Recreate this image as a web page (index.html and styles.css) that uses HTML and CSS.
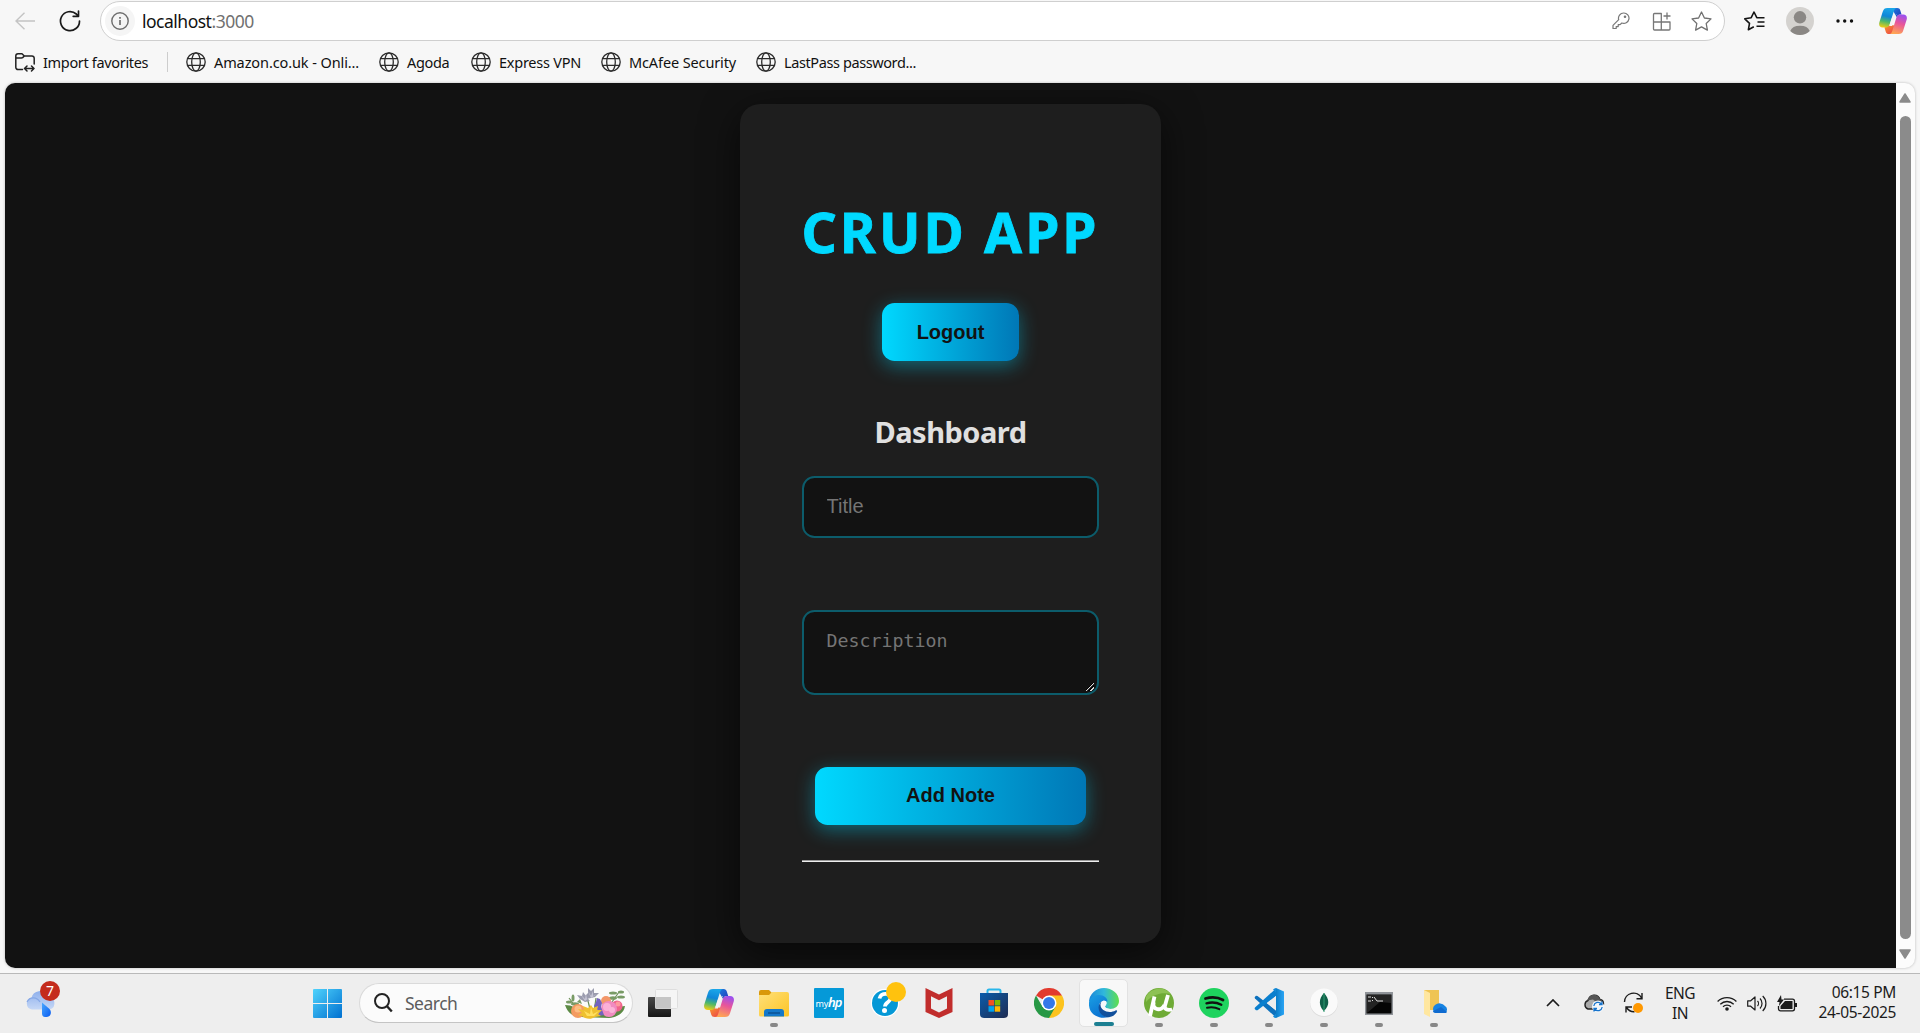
FILE: index.html
```html
<!DOCTYPE html>
<html lang="en">
<head>
<meta charset="utf-8">
<title>CRUD App</title>
<link rel="stylesheet" href="styles.css">
</head>
<body>
<svg class="defs" aria-hidden="true">
  <defs>
    <linearGradient id="cpA" x1="0.4" y1="0" x2="0.2" y2="1"><stop offset="0" stop-color="#1aa5e8"/><stop offset=".4" stop-color="#0f86d8"/><stop offset=".68" stop-color="#4fb86a"/><stop offset="1" stop-color="#f5cf12"/></linearGradient>
    <linearGradient id="cpB" x1="0.7" y1="0" x2="0.4" y2="1"><stop offset="0" stop-color="#9a50f0"/><stop offset=".45" stop-color="#e8559a"/><stop offset="1" stop-color="#ffa653"/></linearGradient>
    <linearGradient id="cpC" x1="0" y1="0" x2="1" y2="1"><stop offset="0" stop-color="#1c7de0"/><stop offset="1" stop-color="#2238b8"/></linearGradient>
    <linearGradient id="cpD" x1="0" y1="0" x2="1" y2="1"><stop offset="0" stop-color="#fb9a2a"/><stop offset="1" stop-color="#e8384f"/></linearGradient>
    <linearGradient id="win" x1="0" y1="0" x2="1" y2="1"><stop offset="0" stop-color="#4fd3fc"/><stop offset="1" stop-color="#0070d0"/></linearGradient>
    <linearGradient id="cloud" x1="0" y1="0" x2="0" y2="1"><stop offset="0" stop-color="#8fb0ec"/><stop offset="1" stop-color="#c6d8f6"/></linearGradient>
    <linearGradient id="drop" x1="0" y1="0" x2="1" y2="1"><stop offset="0" stop-color="#4aa8ff"/><stop offset="1" stop-color="#0a5cf0"/></linearGradient>
    <linearGradient id="tvDark" x1="0" y1="0" x2="0" y2="1"><stop offset="0" stop-color="#4a4a4a"/><stop offset="1" stop-color="#161616"/></linearGradient>
    <linearGradient id="folder" x1="0" y1="0" x2="1" y2="1"><stop offset="0" stop-color="#ffe07a"/><stop offset="1" stop-color="#fcc425"/></linearGradient>
    <linearGradient id="store" x1="0" y1="0" x2="1" y2="1"><stop offset="0" stop-color="#0b5cab"/><stop offset="1" stop-color="#1f2c52"/></linearGradient>
    <linearGradient id="edgeA" x1="0" y1="0.5" x2="1" y2="0.5"><stop offset="0" stop-color="#1a86d8"/><stop offset=".5" stop-color="#30b8dc"/><stop offset="1" stop-color="#5fe04a"/></linearGradient>
    <linearGradient id="edgeB" x1="0" y1="0" x2="0.6" y2="1"><stop offset="0" stop-color="#1ba0e4"/><stop offset="1" stop-color="#0a6fd0"/></linearGradient>
    <linearGradient id="vsc" x1="0" y1="0" x2="1" y2="0"><stop offset="0" stop-color="#0a7dc8"/><stop offset="1" stop-color="#2aa4f4"/></linearGradient>
    <symbol id="copilot" viewBox="0 0 30 28">
      <path d="M16 0h3.500c2 0 2.800.9 3.300 2.400L24.200 7h-1.500c-2 0-2.900 1-3.600 3L15 3z" fill="url(#cpC)"/>
      <path d="M5.800 21l1.400 4.500C7.700 27.200 8.700 28 11 28h4l3-9-6-1z" fill="url(#cpD)"/>
      <path d="M9 0h10.500c-2 0-2.800 1-3.500 3.200L11.600 17c-.9 2.800-2 4-4.800 4H4C.4 21-.7 18.400.5 14.800L4 3.800C4.900 1 6.200 0 9 0z" fill="url(#cpA)"/>
      <path d="M23 7h3c3.600 0 4.700 2.600 3.500 6.200L26 24.200C25.100 27 23.800 28 21 28H10.800c2 0 2.700-1 3.400-3.200L18.400 11C19.200 8.200 20.200 7 23 7z" fill="url(#cpB)"/>
      <path d="M17.700 8.500c.5-1 1-1.500 2.500-1.500h-2L14 19.500h-3.300c.6-.7.900-1.500 1.200-2.500l1.500-5c.7-2.300 1.700-3.500 4.300-3.500z" fill="#f6f3f6"/>
    </symbol>
    <symbol id="globe" viewBox="0 0 20 20">
      <g fill="none" stroke="#2b2b2b" stroke-width="1.300"><circle cx="10" cy="10" r="9.200"/><ellipse cx="10" cy="10" rx="4.300" ry="9.200"/><path d="M1.500 6.700h17M1.500 13.300h17"/></g>
    </symbol>
  </defs>
</svg>

<div class="browser">
  <header class="toolbar">
    <svg class="back" width="20" height="18" viewBox="0 0 20 18" fill="none" stroke="#c4c4c4" stroke-width="1.400"><path d="M9.500.8L1 9l8.500 8.200M1 9h19"/></svg>
    <svg class="reload" width="22" height="22" viewBox="0 0 22 22" fill="none" stroke="#1a1a1a" stroke-width="1.700" stroke-linecap="round" stroke-linejoin="round"><path d="M20.500 11A9.500 9.500 0 1 1 17.300 4l2 2.200M19.500 1v5.300h-5.300"/></svg>
    <div class="address">
      <span class="site-info"><svg width="18" height="18" viewBox="0 0 18 18" fill="none" stroke="#6e6e6e" stroke-width="1.400"><circle cx="9" cy="9" r="8.200"/><path d="M9 8v5M9 5v1.700" stroke-width="1.700"/></svg></span>
      <span class="url">localhost<span class="port">:3000</span></span>
      <svg class="key" width="18" height="18" viewBox="0 0 18 18" fill="none" stroke="#777" stroke-width="1.200" stroke-linejoin="round"><path d="M11.700 1a5.200 5.200 0 0 0-5 6.700L1 13.400V16.500h3.200V14.600h2V12.600h1.900l1.700-1.600A5.200 5.200 0 1 0 11.700 1z"/><circle cx="13" cy="4.700" r=".7" fill="#777"/></svg>
      <svg class="apps" width="20" height="20" viewBox="0 0 20 20" fill="none" stroke="#777" stroke-width="1.300" stroke-linejoin="round"><path d="M9.300 10V2.500H2.500a1 1 0 0 0-1 1V18a1 1 0 0 0 1 1H17a1 1 0 0 0 1-1v-7H1.500M9.300 10v9M15 1.500v7M11.500 5h7"/></svg>
      <svg width="21" height="20" viewBox="0 0 21 20" fill="none" stroke="#707070" stroke-width="1.300" stroke-linejoin="round"><path d="M10.500 1l2.900 6 6.600.9-4.800 4.600 1.200 6.600-5.900-3.200-5.900 3.200 1.200-6.600L1 7.900 7.600 7z"/></svg>
    </div>
    <svg class="favs" width="21" height="20" viewBox="0 0 21 20" fill="none" stroke="#151515" stroke-width="1.600" stroke-linejoin="round"><path d="M13.500 6.700h-.7L10 1 7.200 6.700.8 7.800l4.700 4.500-1.100 6.400 5.400-3M12.500 6.700h8M13.500 11h7M12.500 15.200h8"/></svg>
    <svg class="avatar" width="28" height="28" viewBox="0 0 28 28"><circle cx="14" cy="14" r="14" fill="#d4d2cf"/><circle cx="14" cy="10.300" r="6.200" fill="#8a8784"/><path d="M4.300 24a10 7 0 0 1 19.400 0A14 14 0 0 1 4.300 24z" fill="#8a8784"/></svg>
    <svg class="dots" width="18" height="4" viewBox="0 0 18 4" fill="#111"><circle cx="2" cy="2" r="1.700"/><circle cx="8.700" cy="2" r="1.700"/><circle cx="15.500" cy="2" r="1.700"/></svg>
    <svg width="28" height="26"><use href="#copilot"/></svg>
  </header>

  <nav class="favorites">
    <span class="fav import"><svg width="20" height="19" viewBox="0 0 20 19" fill="none" stroke="#222" stroke-width="1.500" stroke-linecap="round" stroke-linejoin="round"><path d="M7.500 16.500H3a2.200 2.200 0 0 1-2.200-2.200V3A2.200 2.200 0 0 1 3 .8h4L9.300 3H17a2.200 2.200 0 0 1 2.200 2.200V11M.8 5H6.500c1 0 1.800-.7 2.800-2M9.500 15.500h9.500M12 13l-2.500 2.500L12 18M16.500 13l2.500 2.500-2.500 2.500"/></svg><span>Import favorites</span></span>
    <span class="sep"></span>
    <span class="fav amazon"><svg width="20" height="20"><use href="#globe"/></svg><span>Amazon.co.uk - Onli...</span></span>
    <span class="fav agoda"><svg width="20" height="20"><use href="#globe"/></svg><span>Agoda</span></span>
    <span class="fav express"><svg width="20" height="20"><use href="#globe"/></svg><span>Express VPN</span></span>
    <span class="fav mcafee"><svg width="20" height="20"><use href="#globe"/></svg><span>McAfee Security</span></span>
    <span class="fav lastpass"><svg width="20" height="20"><use href="#globe"/></svg><span>LastPass password...</span></span>
  </nav>

  <div class="viewport">
    <main class="page">
      <section class="card">
        <h1>CRUD APP</h1>
        <button class="btn logout" type="button">Logout</button>
        <h2>Dashboard</h2>
        <input class="field title" type="text" placeholder="Title">
        <textarea class="field description" placeholder="Description"></textarea>
        <button class="btn add" type="button">Add Note</button>
        <div class="rule"></div>
      </section>
    </main>
    <div class="scrollbar">
      <svg width="12" height="10" viewBox="0 0 12 10"><path d="M6 1l5 8H1z" fill="#8b8b8b" stroke="#8b8b8b" stroke-linejoin="round" stroke-width="1.500"/></svg>
      <span class="thumb"></span>
      <svg width="12" height="10" viewBox="0 0 12 10"><path d="M6 9l5-8H1z" fill="#8b8b8b" stroke="#8b8b8b" stroke-linejoin="round" stroke-width="1.500"/></svg>
    </div>
  </div>
</div>

<footer class="taskbar">
  <div class="weather">
    <svg width="30" height="28" viewBox="0 0 30 28"><path d="M6 20.500a6 6 0 0 1-.5-11.800A8.500 8.500 0 0 1 21.500 7a7 7 0 0 1 2.500 13.500z" fill="url(#cloud)"/><path d="M1 13c3-6 10-5 13 0" fill="none" stroke="#86a8e6" stroke-width="1.200"/><path d="M16 13.500l7.500 6.500c3 3.500.8 8-3 8H19c-2 0-3-1.500-3-3.500z" fill="url(#drop)"/></svg>
    <span class="badge">7</span>
  </div>
  <svg class="start" width="29" height="29" viewBox="0 0 29 29"><path d="M1 0h13v14H0V1a1 1 0 0 1 1-1zM15 0h13a1 1 0 0 1 1 1v13H15zM0 15h14v14H1a1 1 0 0 1-1-1zM15 15h14v13a1 1 0 0 1-1 1H15z" fill="url(#win)"/></svg>
  <div class="search">
    <svg width="19" height="20" viewBox="0 0 19 20" fill="none" stroke="#222" stroke-width="2"><circle cx="8" cy="8" r="7"/><path d="M12.800 13l5 5.500" stroke-width="2.400"/></svg>
    <span>Search</span>
    <svg width="62" height="32" viewBox="0 0 62 32">
      <path d="M1 18c3 9 8 11 16 12l28 1c9-1 15-5 16-12-6 0-10 3-13 7L17 28C13 21 8 18 1 18z" fill="#5c8a45"/>
      <g stroke="#6b8f56" stroke-width="1.200" fill="none"><path d="M30 25l2-14M26 22l-3-12M12 20L5 11M48 15l7-10"/></g>
      <g fill="#799b66"><ellipse cx="5" cy="15" rx="3" ry="1.500"/><ellipse cx="9" cy="11" rx="1.500" ry="3.500"/><ellipse cx="11" cy="17" rx="4" ry="1.700"/><ellipse cx="49" cy="6" rx="4" ry="1.500"/><ellipse cx="57" cy="5" rx="3" ry="1.500"/><ellipse cx="49" cy="11" rx="4" ry="1.800"/><ellipse cx="57" cy="10" rx="4" ry="1.600"/><path d="M13 15l3-3 2 5z"/></g>
      <g fill="#9b9cae"><path d="M13 8l5 1 1-4 3 4 3-1-1 4 2 2-5 1-5-3zM21 9l3-3 0-5 3 3 3-3 0 5 5 0-4 4-4 1-5 1z"/></g>
      <g fill="#c6c5d5"><path d="M17 8l4 4 1-5 1 5 3-2-5 4zM24 4l3 5 2-5 0 5 4-2-6 4z"/></g>
      <circle cx="14" cy="24" r="7" fill="#f39a61"/><circle cx="14" cy="22" r="3.500" fill="#fcbd83"/>
      <circle cx="42" cy="14" r="5" fill="#f39769"/><circle cx="53" cy="19" r="5.500" fill="#f0648c"/><circle cx="54" cy="17" r="2.500" fill="#fd9a9e"/>
      <circle cx="45" cy="22" r="8" fill="#f18bc0"/><circle cx="43" cy="20" r="4" fill="#fbb0d7"/><circle cx="48" cy="23" r="3" fill="#fbb4d8"/>
      <path d="M33 11l3 1 2 4-1 4 3 8-5 1-2-7-3-3 2-4z" fill="#7363bd"/>
      <path d="M14 22l6 1-1-4 5 2 3-3 2 3 5-2-1 4 5 0-4 4 3 2-6 1c-4 3-10 2-13-1l-4-1 4-2z" fill="#efc02f"/><path d="M20 24l6 3 1-7 2 7 6-3-5 5h-7z" fill="#ffdf5e"/>
    </svg>
  </div>
  <svg class="taskview" width="30" height="28" viewBox="0 0 30 28"><rect x="0" y="8" width="23" height="20" rx="1" fill="url(#tvDark)"/><rect x="7.500" y=".5" width="22" height="19" rx="1" fill="#f5f5f5" stroke="#dedede"/><path d="M7.500 8H23v11.500H7.500z" fill="#c5c5c5"/></svg>

  <div class="apps-row">
    <span class="app"><svg width="30" height="28"><use href="#copilot"/></svg></span>
    <span class="app running"><svg width="30" height="28" viewBox="0 0 30 28"><path d="M0 3a2 2 0 0 1 2-2h8l3 3v4H0z" fill="#d9980a"/><path d="M0 6h10l3-3h15a2 2 0 0 1 2 2v21a1.500 1.500 0 0 1-1.500 1.500h-27A1.500 1.500 0 0 1 0 26z" fill="url(#folder)"/><path d="M5 27.500V23a3 3 0 0 1 3-3h14a3 3 0 0 1 3 3v4.500z" fill="#1378ca"/><path d="M9 24h12" stroke="#0a4d8c" stroke-width="1.300"/></svg></span>
    <span class="app"><span class="myhp">my<b>hp</b></span></span>
    <span class="app"><svg class="help" width="36" height="36" viewBox="0 0 36 36"><circle cx="15" cy="21" r="14.300" fill="#fff"/><circle cx="15" cy="21" r="13" fill="#0598d6"/><path d="M9.500 16.500c1-6.500 12-6 11 .3-.6 3.500-5.500 3.700-5.500 7.700" fill="none" stroke="#fff" stroke-width="3.800"/><circle cx="14.500" cy="28.500" r="2.500" fill="#fff"/><circle cx="26" cy="10" r="10" fill="#ffc20e"/></svg></span>
    <span class="app"><svg width="28" height="30" viewBox="0 0 28 30"><path d="M.5 0L14 6.500 27.500 0v24L14 30 .500 24z" fill="#c12d2c"/><path d="M6 8.300l8 4 8-4V20.500L14 24.500l-8-4z" fill="#ededed"/></svg></span>
    <span class="app"><svg width="30" height="30" viewBox="0 0 30 30"><path d="M8.500 6V3a1.500 1.500 0 0 1 1.500-1.500h10A1.500 1.500 0 0 1 21.500 3v3" fill="none" stroke="#29b6ea" stroke-width="2"/><path d="M1 5h28v21a4 4 0 0 1-4 4H5a4 4 0 0 1-4-4z" fill="url(#store)"/><path d="M9.500 12h5.500v5.500H9.500z" fill="#f25022"/><path d="M15.700 12h5.500v5.500h-5.500z" fill="#7fba00"/><path d="M9.500 18.200h5.500v5.500H9.500z" fill="#00a4ef"/><path d="M15.700 18.200h5.500v5.500h-5.500z" fill="#ffb900"/></svg></span>
    <span class="app"><svg width="30" height="30" viewBox="0 0 30 30"><path d="M15 15L2 7.500A15 15 0 0 1 28 7.500z" fill="#e23a2e"/><path d="M15 15V7.500H28A15 15 0 0 1 15 30z" fill="#fcc31e"/><path d="M2 7.500l6.500 11.300L15 22l6.500-3.200L15 30A15 15 0 0 1 2 7.500z" fill="#279845"/><circle cx="15" cy="15" r="7.500" fill="#fff"/><circle cx="15" cy="15" r="6" fill="#3478e8"/></svg></span>
    <span class="app active"><svg width="30" height="30" viewBox="0 0 30 30"><path d="M0 14A15 14.500 0 0 1 15 0c8 0 15 5.500 15 13 0 5-4 8-9 8-3 0-5-1-5-2.500 0-1 1.500-1.300 1.500-3.500C17.500 9.500 6 7 0 14z" fill="url(#edgeA)"/><path d="M0 14.500C1 9 6 7 10 7c5 0 8.500 3 8.500 6.500-5-2-8.500 1-8.500 5C10 24 15 29 20 29 9 32-1 26 0 14.500z" fill="url(#edgeB)"/><path d="M12.500 13.500C8 17 8.500 25 15.500 28.500c5 2 10.500-.5 12.500-5 .5-1-.5-1.500-1.500-1C20.500 26 11 23 11.500 16z" fill="#12509c"/><path d="M14 13a4 4 0 0 0-1 5.500c2 3.500 7 4 10 2.500-4 0-7-1-7-2.500 0-1 1.500-1.500 1.500-3.500 0-1.500-1.500-2.500-3.500-2z" fill="#f5f8fb"/></svg></span>
    <span class="app running"><svg width="30" height="30" viewBox="0 0 30 30"><circle cx="15" cy="15" r="15" fill="#6fab36"/><path d="M2 9a15 15 0 0 1 25-3C18 4 9 6 2 14z" fill="#8dc254"/><path d="M10.500 8.500L6 28M9.700 14c-2 8.500 8 9.500 10.800 3M24 7l-3 10.500c-1 3.500 1.500 5 7 4" fill="none" stroke="#fff" stroke-width="3.800"/></svg></span>
    <span class="app running"><svg width="30" height="30" viewBox="0 0 30 30"><circle cx="15" cy="15" r="15" fill="#1ed35e"/><g fill="none" stroke="#111" stroke-linecap="round"><path d="M6.500 10.500c6-1.700 12.500-1.200 17.500 1.500" stroke-width="2.800"/><path d="M7.500 15.300c5-1.300 10.500-.8 14.800 1.500" stroke-width="2.400"/><path d="M8 19.800c4.500-1 8.500-.5 12.300 1.400" stroke-width="2"/></g></svg></span>
    <span class="app running"><svg width="30" height="30" viewBox="0 0 30 30"><path d="M3.500 8L22 22.500v7L1 10.500a1.500 1.500 0 0 1 0-1.800l1-1z" fill="#0d71bd"/><path d="M3.500 22.300L22 8V.5L1 19.500a1.500 1.500 0 0 0 0 1.800l1 1z" fill="#0a7fce"/><path d="M22 0l8 3.500v23L22 30z" fill="url(#vsc)"/><path d="M22 8v14.500L13 15z" fill="#ededed"/><path d="M22 0c-1 0-2 .5-3 1.500l3 3zM22 30c-1 0-2-.5-3-1.500l3-3z" fill="#128ad8"/></svg></span>
    <span class="app running"><svg width="28" height="30" viewBox="0 0 28 30"><circle cx="14" cy="15" r="14" fill="#dcdcdc"/><circle cx="14" cy="14.300" r="13.800" fill="#fafafa"/><path d="M14 5c5.500 5.500 6 13-.3 18C8.500 18 8.500 10.500 14 5z" fill="#116149"/><path d="M14 5v19" stroke="#2e9b71" stroke-width="1"/></svg></span>
    <span class="app running"><svg width="28" height="23" viewBox="0 0 28 23"><path d="M0 0h28v23H0z" fill="#8f9398"/><path d="M1.500 2.500h25v19h-25z" fill="#050505"/><path d="M2 21l13-11 11 1V3H2z" fill="#232323"/><path d="M3 5h3M3 9h3M7.500 5v1M7.500 8v1M9 5l3 4h6" fill="none" stroke="#ddd" stroke-width="1"/></svg></span>
    <span class="app running"><svg width="30" height="28" viewBox="0 0 30 28"><path d="M5 1h15v20H5z" fill="#efc454"/><path d="M5 1l6 3v24l-6-3z" fill="#ffe7a0"/><path d="M16 24a5 5 0 0 1 0-8 7 7 0 0 1 10 1 4 4 0 0 1 0 7z" fill="#1683e2"/><path d="M14 22l8-4 6 5c-1 1-1 1-2 1H17c-2 0-3-1-3-2z" fill="#0f6bd0"/></svg></span>
  </div>

  <div class="tray">
    <svg class="chev" width="14" height="8" viewBox="0 0 14 8" fill="none" stroke="#1b1b1b" stroke-width="1.700"><path d="M1 7l6-6 6 6"/></svg>
    <svg class="onedrive" width="22" height="19" viewBox="0 0 22 19"><path d="M5 15a4.500 4.500 0 0 1 0-8.500C7-.5 15-.5 17 5.500c2 .2 3.500 2 3.500 4.500L10 15z" fill="#aaa" stroke="#222" stroke-width="1.400"/><path d="M4 6.500l6-1 6 5 4-2-3-3.500C14-1 7-1 4 6.500z" fill="#555"/><circle cx="15" cy="12.500" r="6" fill="#f2f6fa"/><path d="M10.800 12a4.300 4.300 0 0 1 7.500-2.200l.5.700M19.200 13a4.300 4.300 0 0 1-7.500 2.200l-.5-.7M19 7.500v3h-3M11 17.500v-3h3" fill="none" stroke="#1673cc" stroke-width="1.300"/></svg>
    <svg class="sync" width="22" height="22" viewBox="0 0 22 22" fill="none" stroke="#1b1b1b" stroke-width="1.400"><path d="M1.500 10A9 9 0 0 1 18.500 6M19 1v5.700h-5.500M3 20.500V15h6M3.500 15.500c2 3 5 4.500 8 4.300"/><circle cx="15" cy="16" r="5" fill="#ff9800" stroke="none"/></svg>
    <div class="lang"><span>ENG</span><span>IN</span></div>
    <svg class="wifi" width="20" height="15" viewBox="0 0 20 15" fill="none" stroke="#1b1b1b" stroke-width="1.300"><path d="M.6 5.500a13.500 13.500 0 0 1 18.800 0M3.300 8.200a9.600 9.600 0 0 1 13.400 0M6 10.800a5.700 5.700 0 0 1 8 0"/><circle cx="10" cy="13" r="1.800" fill="#1b1b1b" stroke="none"/></svg>
    <svg class="sound" width="20" height="17" viewBox="0 0 20 17" fill="none" stroke="#1b1b1b" stroke-width="1.200" stroke-linejoin="round"><path d="M.7 5.800h3L8 2v13l-4.300-3.800h-3zM10.500 6c1.300 1.300 1.300 3.700 0 5M13 3.500c2.700 2.700 2.700 7.300 0 10M15.700 1c4.300 4 4.300 11 0 15"/></svg>
    <svg class="battery" width="20" height="17" viewBox="0 0 20 17"><path d="M7 4.200h8.500a2 2 0 0 1 2 2v7.600a2 2 0 0 1-2 2H3.500a2 2 0 0 1-2-2V11" fill="none" stroke="#1b1b1b" stroke-width="1.300"/><path d="M8 6h7.500v8h-12v-3zM18 8h2v4h-2z" fill="#1b1b1b"/><path d="M4 0L0 7h2.500L2 11l5-6.500H4.500z" fill="#1b1b1b"/></svg>
    <div class="clock"><span>06:15 PM</span><span>24-05-2025</span></div>
  </div>
</footer>
</body>
</html>
```
FILE: styles.css
```css
* { box-sizing: border-box; }

body {
  margin: 0;
  width: 1920px;
  height: 1033px;
  overflow: hidden;
  display: flex;
  flex-direction: column;
  background: #f7f7f7;
  font-family: "Noto Sans", "Open Sans", sans-serif;
  color: #1b1b1b;
}

svg { display: block; flex: none; }
.defs { position: absolute; width: 0; height: 0; }

/* Browser chrome */
.browser { height: 973px; display: flex; flex-direction: column; }

.toolbar {
  height: 41px;
  flex: none;
  display: flex;
  align-items: center;
  padding: 1px 13px 0 15px;
}
.reload { margin-left: 24px; }
.address {
  width: 1625px;
  height: 40px;
  margin-left: 19px;
  display: flex;
  align-items: center;
  background: #fff;
  border: 1px solid #cfcfcf;
  border-radius: 20px;
  padding: 0 12px 0 4px;
}
.site-info {
  width: 30px;
  height: 30px;
  display: flex;
  align-items: center;
  justify-content: center;
  border-radius: 50%;
  background: #f5f5f5;
}
.url {
  flex: 1;
  margin-left: 7px;
  font-size: 17.500px;
  line-height: 24px;
  letter-spacing: -0.5px;
  color: #111;
}
.port { color: #717171; }
.key { margin-right: 22px; }
.apps { margin-right: 19px; }
.favs { margin-left: 19px; }
.avatar { margin-left: 21px; }
.dots { margin: 0 25px 0 22px; }

.favorites {
  height: 42px;
  flex: none;
  display: flex;
  align-items: center;
  padding-left: 15px;
  font-size: 14.500px;
  line-height: 20px;
  letter-spacing: -0.33px;
  color: #111;
}
.fav { display: flex; align-items: center; gap: 8px; white-space: nowrap; flex: none; }
.import { width: 152px; }
.sep { width: 1px; height: 20px; margin-right: 18px; background: #cdcdcd; }
.amazon { width: 193px; letter-spacing: -0.1px; }
.agoda { width: 92px; }
.express { width: 130px; letter-spacing: -0.25px; }
.mcafee { width: 155px; letter-spacing: -0.12px; }
.lastpass { letter-spacing: -0.4px; }

.viewport {
  height: 885px;
  flex: none;
  display: flex;
  margin: 0 5px;
  border-radius: 10px;
  overflow: hidden;
  background: #fcfcfc;
  box-shadow: 0 0 3px rgba(0, 0, 0, .25);
}

/* Application page */
.page {
  width: 1891px;
  display: flex;
  justify-content: center;
  align-items: flex-start;
  padding-top: 21px;
  background: #121212;
}
.card {
  width: 421px;
  height: 839px;
  display: flex;
  flex-direction: column;
  align-items: center;
  padding: 90px 62px 0;
  border-radius: 20px;
  background: #1e1e1e;
  box-shadow: 0 10px 38px rgba(0, 0, 0, .6);
}
h1 {
  margin: 0;
  font-size: 55px;
  line-height: 76px;
  letter-spacing: 3px;
  font-weight: 700;
  white-space: nowrap;
  color: #00d9ff;
  -webkit-text-stroke: 0.8px #00d9ff;
}
h2 {
  margin: 51px 0 24px;
  font-size: 29px;
  line-height: 40px;
  letter-spacing: -0.5px;
  font-weight: 700;
  color: #e0e0e0;
}
.btn {
  height: 58px;
  padding: 0;
  flex: none;
  border: 0;
  border-radius: 12.500px;
  background: linear-gradient(90deg, #00d9ff, #0077b6);
  box-shadow: 0 5px 19px rgba(0, 217, 255, .4);
  font: 700 20px/23px "Liberation Sans", Arial, sans-serif;
  color: #121212;
}
.logout { width: 137px; margin-top: 33px; }
.add { width: 271px; margin-top: 72px; padding-bottom: 2px; }
.field {
  width: 297px;
  flex: none;
  margin: 0;
  padding: 17px 22.500px;
  border: 2px solid #0c5c6b;
  border-radius: 12.500px;
  background: #121212;
  color: #e0e0e0;
}
.field::placeholder { color: #757575; }
.title { height: 62px; padding-bottom: 18px; font: 20px/23px "Liberation Sans", Arial, sans-serif; }
.description {
  height: 85px;
  margin-top: 72px;
  overflow: hidden;
  resize: both;
  font: 18.300px/23px "DejaVu Sans Mono", monospace;
}
.description::-webkit-resizer {
  background: linear-gradient(135deg, transparent 38%, #000 40%, #000 44%, #ddd 46%, #ddd 54%, #000 57%, #000 70%, #ddd 73%, #ddd 81%, transparent 84%) right 3px bottom 2px / 8px 8px no-repeat;
}
.rule {
  width: 297px;
  height: 2px;
  margin-top: 35px;
  border-top: 1px solid #9a9a9a;
  border-bottom: 1px solid #eee;
}

.scrollbar {
  flex: 1;
  display: flex;
  flex-direction: column;
  align-items: center;
  padding: 10px 1px 9px 0;
}
.thumb { width: 11px; height: 824px; margin: 13px 0 10px; border-radius: 6px; background: #8b8b8b; }

/* Taskbar */
.taskbar {
  height: 60px;
  display: flex;
  align-items: center;
  padding-bottom: 1px;
  border-top: 1px solid #b9b9b9;
  background: #eee;
}
.weather { position: relative; margin-left: 26px; width: 30px; }
.badge {
  position: absolute;
  left: 14px;
  top: -8px;
  width: 20px;
  height: 20px;
  border-radius: 50%;
  background: #c42b1c;
  color: #fff;
  font-size: 14px;
  line-height: 20px;
  text-align: center;
}
.start { margin-left: 257px; }
.search {
  width: 274px;
  height: 40px;
  margin-left: 17px;
  display: flex;
  align-items: center;
  border: 1px solid #dadada;
  border-bottom-color: #c4c4c4;
  border-radius: 20px;
  background: #fbfbfb;
  padding: 0 6px 0 14px;
}
.search span { flex: 1; margin-left: 12px; font-size: 17.500px; letter-spacing: -0.5px; color: #5d5d5d; }
.taskview { margin-left: 15px; }
.apps-row { display: flex; margin-left: 13px; }
.app {
  position: relative;
  width: 55px;
  height: 48px;
  display: flex;
  align-items: center;
  justify-content: center;
}
.app.running::after,
.app.active::after {
  content: "";
  position: absolute;
  bottom: 0;
  left: 23.500px;
  width: 8px;
  height: 4px;
  border-radius: 2px;
  background: #888;
}
.app.active { width: 49px; margin: 0 3px; border: 1px solid #e2e2e2; border-radius: 5px; background: #f8f8f8; }
.app.active::after { left: 14px; width: 20px; background: #1c7f92; }
.help { margin: -7px -8px 0 0; }
.myhp {
  width: 30px;
  height: 30px;
  border-radius: 1px;
  background: #0599d8;
  color: #fff;
  font-size: 9px;
  line-height: 29px;
  text-align: center;
  letter-spacing: -0.3px;
}
.myhp b { font-size: 13px; font-style: italic; font-weight: 600; letter-spacing: -1px; }

.tray { flex: 1; display: flex; align-items: center; padding-right: 24px; font-size: 15.500px; line-height: 20px; letter-spacing: -0.6px; }
.chev { margin-left: 85px; }
.onedrive { margin-left: 23px; }
.sync { margin-left: 18px; }
.lang { width: 40px; margin-left: 15px; display: flex; flex-direction: column; align-items: center; }
.wifi { margin-left: 17px; }
.sound { margin-left: 10px; }
.battery { margin-left: 10px; }
.clock { flex: 1; display: flex; flex-direction: column; align-items: flex-end; white-space: nowrap; letter-spacing: -0.35px; padding-bottom: 2px; }
```
